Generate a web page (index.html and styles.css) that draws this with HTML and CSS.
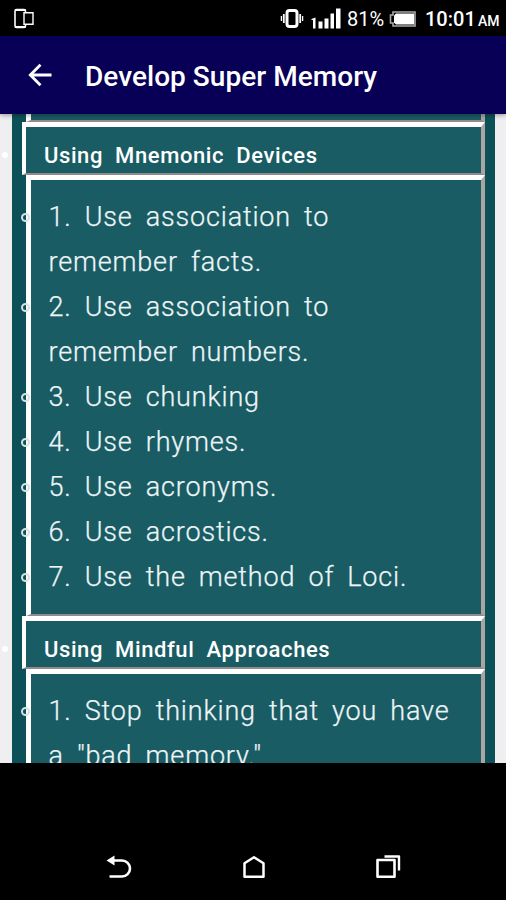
FILE: index.html
```html
<!DOCTYPE html>
<html lang="en">
<head>
  <meta charset="UTF-8">
  <title>Develop Super Memory</title>
  <meta name="viewport" content="width=device-width, initial-scale=1.0">
  <link rel="stylesheet" href="styles.css">
</head>
<body>
  <div class="status-bar">
    <svg class="cast-icon" width="22" height="22" viewBox="0 0 22 22" fill="none" stroke="#fff" stroke-width="1.6">
      <rect x="2" y="1.5" width="10.5" height="18" rx="1.5"/>
      <path d="M2 1.9h10.5M2 19.1h10.5" stroke-width="2"/>
      <path d="M11 4.7h9v11.6h-9z" fill="#000" stroke-width="1.4"/>
    </svg>
    <div class="status-right">
      <svg class="vibrate-icon" width="24" height="22" viewBox="0 0 24 22" fill="none" stroke="#fff">
        <rect x="7" y="2.5" width="10" height="16" rx="2.5" stroke-width="3"/>
        <path d="M3.8 6v9M20.2 6v9" stroke-width="1.8"/>
        <path d="M1.4 8v5M22.6 8v5" stroke-width="1.3"/>
      </svg>
      <svg class="signal-icon" width="30" height="22" viewBox="0 0 30 22" fill="#fff">
        <path d="M.5 11l4-1.5V20.5H2v-8.5H.5zM7.5 13.5h4v7h-4zM13.5 10.5h4v10h-4zM19.5 5.5h3.5v15h-3.5zM25 .5h4.5v20H25z"/>
      </svg>
      <span class="percent">81%</span>
      <svg class="battery-icon" width="27" height="16" viewBox="0 0 27 16">
        <path d="M4 1h22v14H4v-3H1.5V4H4z" fill="none" stroke="#aaa" stroke-width="1.6"/>
        <path d="M7 2.5h18v11H7l-2-2v-7z" fill="#fff"/>
      </svg>
      <span class="clock">10:01</span>
      <span class="ampm">AM</span>
    </div>
  </div>

  <header class="app-bar">
    <svg class="back-icon" width="24" height="24" viewBox="0 0 24 24" fill="none" stroke="#fff" stroke-width="2.8">
      <path d="M23.5 12H2.5M12.5 1.8L2.3 12l10.2 10.2"/>
    </svg>
    <h1 class="app-title">Develop Super Memory</h1>
  </header>

  <main class="content">
    <div class="page">
      <div class="previous"></div>
      <section class="topic">
        <h2 class="topic-title"><span>Using Mnemonic Devices</span></h2>
        <ul class="steps">
          <li>1. Use association to<br>remember facts.</li>
          <li>2. Use association to<br>remember numbers.</li>
          <li>3. Use chunking</li>
          <li>4. Use rhymes.</li>
          <li>5. Use acronyms.</li>
          <li>6. Use acrostics.</li>
          <li>7. Use the method of Loci.</li>
        </ul>
      </section>
      <section class="topic">
        <h2 class="topic-title"><span>Using Mindful Approaches</span></h2>
        <ul class="steps">
          <li>1. Stop thinking that you have<br>a "bad memory."</li>
        </ul>
      </section>
    </div>
  </main>

  <nav class="nav-bar">
    <svg width="28" height="26" viewBox="0 0 28 26" fill="none" stroke="#fff" stroke-width="2.6">
      <path d="M8 6.5h9a8 8 0 0 1 0 16H4.5"/>
      <path d="M1.5 6.5l8-5v10z" fill="#fff" stroke="none"/>
    </svg>
    <svg width="26" height="26" viewBox="0 0 26 26" fill="none" stroke="#fff" stroke-width="2.5" stroke-linejoin="round">
      <path d="M3.5 9.3L13 3.3l9.5 6v13.4h-19z"/>
    </svg>
    <svg width="26" height="26" viewBox="0 0 26 26" fill="none" stroke="#fff" stroke-width="2.6" stroke-linejoin="round">
      <path d="M2.5 6h17v16.7h-17z"/>
      <path d="M9.5 2.5H24v14" stroke-width="2.4"/>
    </svg>
  </nav>
</body>
</html>
```

FILE: styles.css
```css
* {
  box-sizing: border-box;
}
body {
  margin: 0;
  height: 900px;
  display: flex;
  flex-direction: column;
  overflow: hidden;
  background: #000;
  color: #fff;
  font-family: Roboto, Arial, sans-serif;
}
.status-bar {
  height: 36px;
  flex: none;
  display: flex;
  align-items: center;
  justify-content: space-between;
  padding: 1px 6px 0 13px;
}
.status-right {
  display: flex;
  align-items: center;
}
.signal-icon {
  margin: 0 6px 0 7px;
}
.percent {
  font-size: 20px;
  width: 37px;
}
.battery-icon {
  margin: 0 9px 0 5px;
}
.clock {
  font-size: 20px;
  font-weight: 500;
  width: 49px;
}
.ampm {
  font-size: 14px;
  font-weight: 500;
  width: 22px;
  margin: 5px 0 0 4px;
}
.app-bar {
  position: relative;
  z-index: 1;
  height: 78px;
  flex: none;
  display: flex;
  align-items: center;
  padding: 0 0 0 28px;
  background: #080057;
  box-shadow: 0 1px 5px rgba(0, 0, 0, 0.4);
}
.app-title {
  margin: 3px 0 0 33px;
  font-size: 28px;
  font-weight: 500;
  letter-spacing: 0.04px;
  white-space: nowrap;
}
.content {
  height: 649px;
  flex: none;
  overflow: hidden;
  background: #efeff1;
}
.page {
  width: 483px;
  height: 100%;
  margin-left: 12px;
  padding: 0 10px;
  background: #0c5157;
}
.previous {
  height: 8px;
  margin-left: 4px;
  background: #1a5c64;
  border: solid;
  border-width: 0 4px 2px 5px;
  border-color: #fff #aaa5a3 #918c8b #fff;
}
.topic-title {
  position: relative;
  display: flex;
  align-items: center;
  height: 53px;
  margin: 0;
  padding: 11px 0 0 18px;
  background: #1a5c64;
  border: solid;
  border-width: 5px 4px 2px 4px;
  border-color: #fff #aaa5a3 #918c8b #fff;
  font-size: 22px;
  font-weight: 500;
  letter-spacing: 0.6px;
  word-spacing: 6px;
  white-space: nowrap;
}
/* outer list marker, sits in the page margin */
.topic-title::before {
  content: "";
  position: absolute;
  left: -24px;
  top: 25px;
  width: 6px;
  height: 6px;
  border-radius: 50%;
  background: #fff;
}
.steps {
  margin: 0 0 0 4px;
  padding: 15px 0 14px 18px;
  list-style: none;
  background: #1a5c64;
  border: solid;
  border-width: 5px 4px 2px 5px;
  border-color: #fff #aaa5a3 #918c8b #fff;
  font-size: 27px;
  font-weight: 300;
  line-height: 45px;
  letter-spacing: 0.83px;
  word-spacing: 5.7px;
  white-space: nowrap;
  -webkit-text-stroke: 0.25px #edf5f7;
}
.steps li {
  position: relative;
  left: -0.5px;
  color: #edf5f7;
}
.steps li::before {
  content: "";
  position: absolute;
  left: -28px;
  top: 18px;
  width: 5px;
  height: 5px;
  border: 2px solid #d5e2e4;
  border-radius: 50%;
}
.nav-bar {
  flex: 1;
  display: flex;
  justify-content: space-between;
  align-items: flex-end;
  padding: 0 105px 20px 105px;
}
```
